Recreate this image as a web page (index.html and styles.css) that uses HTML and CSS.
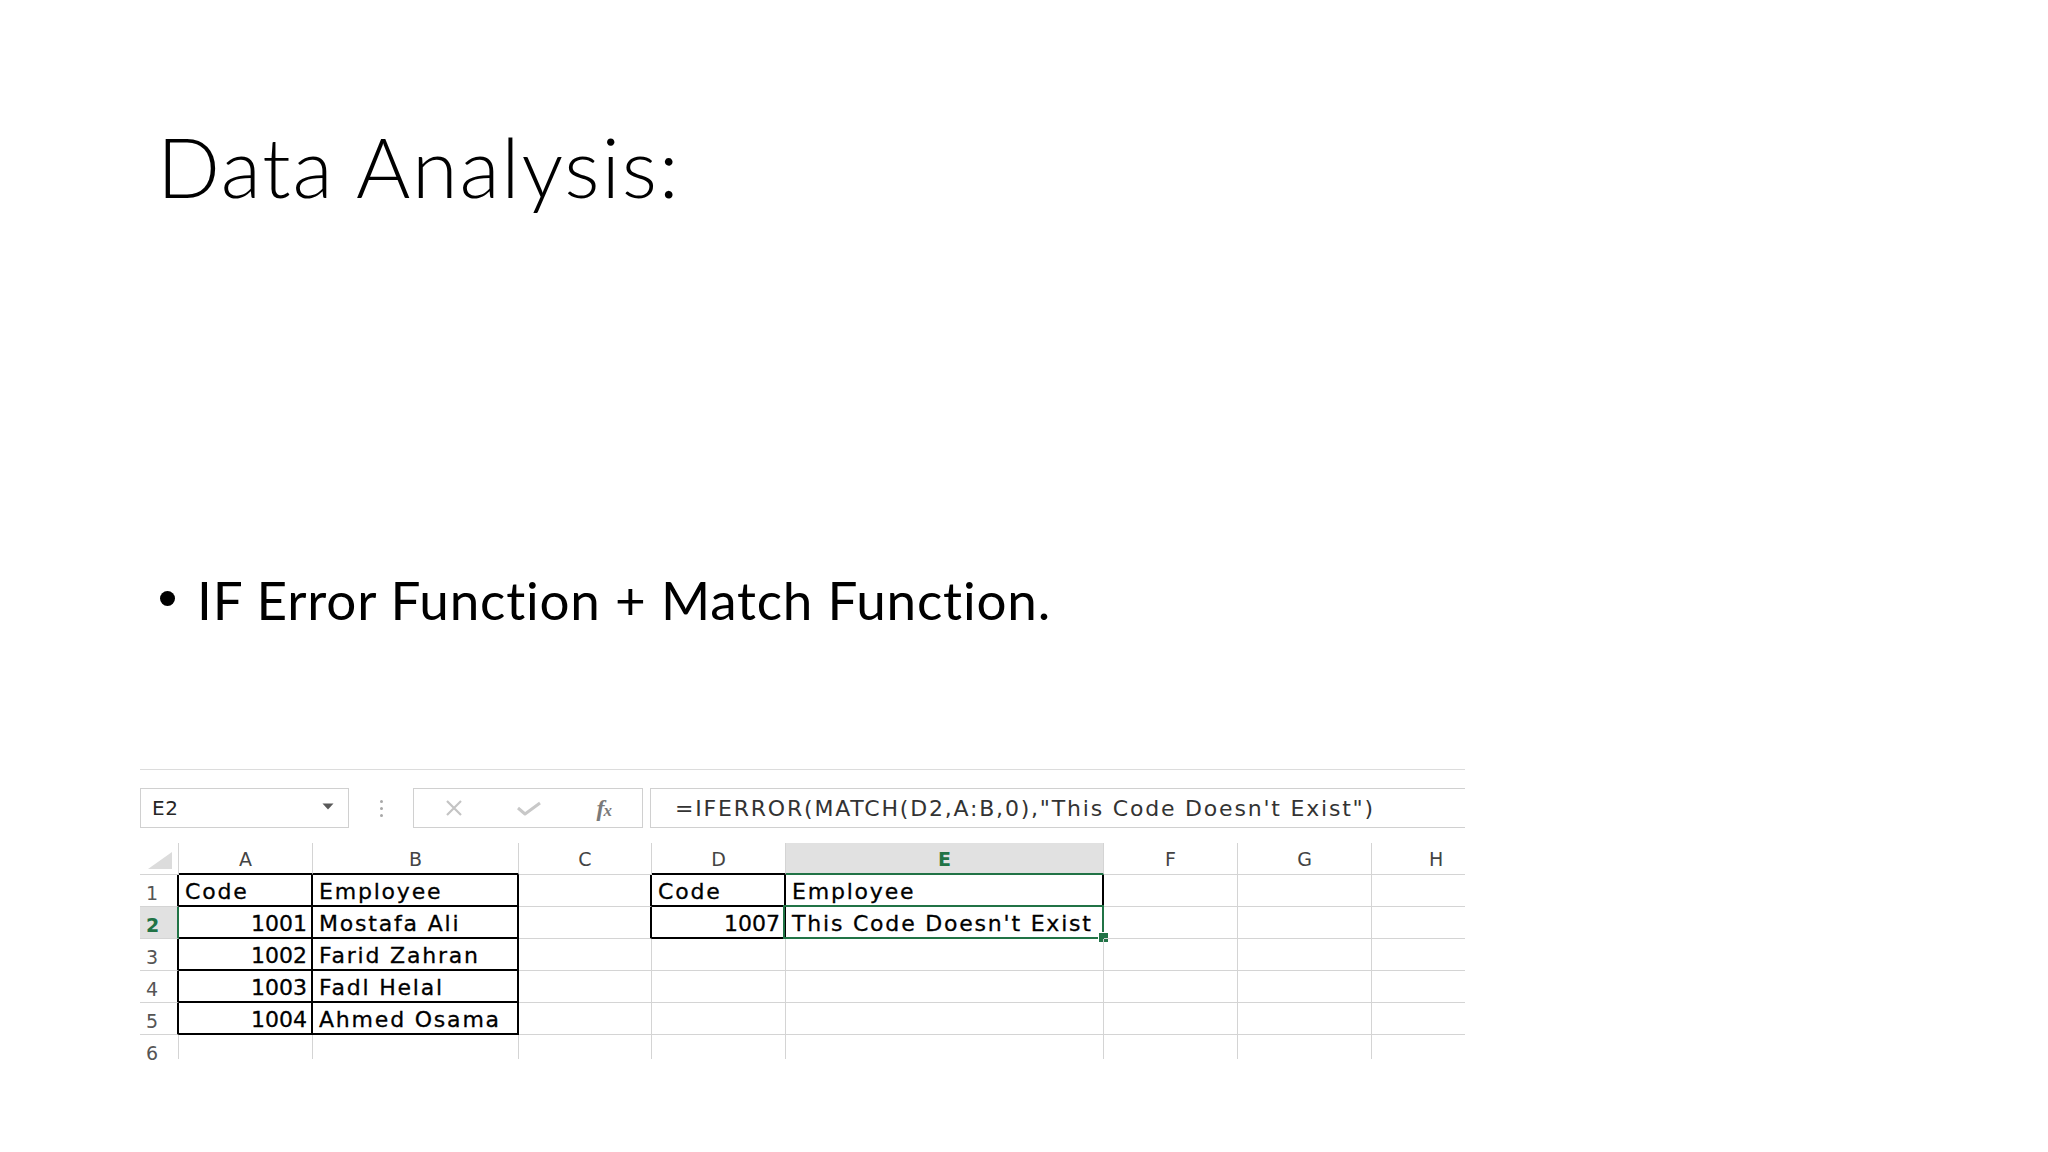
FILE: index.html
```html
<!DOCTYPE html>
<html>
<head>
<meta charset="utf-8">
<link rel="stylesheet" href="styles.css">
</head>
<body>
<div class="slide">
  <h1 class="title">Data Analysis:</h1>
  <ul class="bullets">
    <li><span class="dot"></span><span>IF Error Function + Match Function.</span></li>
  </ul>
  <div class="sheet">
    <div class="toolbar">
      <div class="namebox">
        <span class="name">E2</span>
        <svg class="caret" width="12" height="7" viewBox="0 0 12 7"><path d="M0.5 0.5 H11.5 L6 6.5 Z" fill="#595959"/></svg>
      </div>
      <div class="sep"><i></i><i></i><i></i></div>
      <div class="btnbox">
        <span class="btn"><svg width="20" height="18" viewBox="0 0 20 18"><path d="M3 2 L17 16 M17 2 L3 16" stroke="#c4c4c4" stroke-width="2.2" fill="none"/></svg></span>
        <span class="btn"><svg width="26" height="16" viewBox="0 0 26 16"><path d="M2 8 L9 14 L24 3" stroke="#c8c8c8" stroke-width="3" fill="none" stroke-linejoin="round"/></svg></span>
        <span class="btn fx"><i class="f">f</i><i class="x">x</i></span>
      </div>
      <div class="fbox">=IFERROR(MATCH(D2,A:B,0),"This Code Doesn't Exist")</div>
    </div>
    <div class="grid">
      <div class="c corner"><span class="tri"></span></div>
      <div class="c ch kb">A</div>
      <div class="c ch kb">B</div>
      <div class="c ch">C</div>
      <div class="c ch kb">D</div>
      <div class="c ch act">E</div>
      <div class="c ch">F</div>
      <div class="c ch">G</div>
      <div class="c ch cut">H</div>

      <div class="c rh kr">1</div>
      <div class="c kr kb">Code</div>
      <div class="c kr kb">Employee</div>
      <div class="c kr"></div>
      <div class="c kr kb">Code</div>
      <div class="c kr kb">Employee</div>
      <div class="c"></div>
      <div class="c"></div>
      <div class="c"></div>

      <div class="c rh ract">2</div>
      <div class="c num kr kb">1001</div>
      <div class="c kr kb">Mostafa Ali</div>
      <div class="c kr"></div>
      <div class="c num kr kb">1007</div>
      <div class="c kr kb sel">This Code Doesn't Exist</div>
      <div class="c"></div>
      <div class="c"></div>
      <div class="c"></div>

      <div class="c rh kr">3</div>
      <div class="c num kr kb">1002</div>
      <div class="c kr kb">Farid Zahran</div>
      <div class="c"></div>
      <div class="c"></div>
      <div class="c"></div>
      <div class="c"></div>
      <div class="c"></div>
      <div class="c"></div>

      <div class="c rh kr">4</div>
      <div class="c num kr kb">1003</div>
      <div class="c kr kb">Fadl Helal</div>
      <div class="c"></div>
      <div class="c"></div>
      <div class="c"></div>
      <div class="c"></div>
      <div class="c"></div>
      <div class="c"></div>

      <div class="c rh kr">5</div>
      <div class="c num kr kb">1004</div>
      <div class="c kr kb">Ahmed Osama</div>
      <div class="c"></div>
      <div class="c"></div>
      <div class="c"></div>
      <div class="c"></div>
      <div class="c"></div>
      <div class="c"></div>

      <div class="c rh last">6</div>
      <div class="c last"></div>
      <div class="c last"></div>
      <div class="c last"></div>
      <div class="c last"></div>
      <div class="c last"></div>
      <div class="c last"></div>
      <div class="c last"></div>
      <div class="c last"></div>
    </div>
  </div>
</div>
</body>
</html>
```

FILE: styles.css
```css
html, body {
  margin: 0;
  padding: 0;
  background: #ffffff;
}
body {
  width: 2048px;
  height: 1152px;
  overflow: hidden;
}
.slide {
  width: 2048px;
  height: 1152px;
  padding-top: 116px;
  box-sizing: border-box;
}
.title {
  margin: 0 0 0 157px;
  font-family: Lato, "Open Sans", sans-serif;
  font-weight: 300;
  font-size: 83px;
  line-height: 100px;
  color: #000;
  letter-spacing: 1.8px;
  font-variant-ligatures: none;
}
.bullets {
  list-style: none;
  margin: 352px 0 0 0;
  padding: 0;
}
.bullets li {
  display: flex;
  align-items: center;
  font-family: Lato, "Open Sans", sans-serif;
  font-size: 53px;
  line-height: 64px;
  color: #000;
  padding-left: 160px;
  letter-spacing: 0.8px;
  font-variant-ligatures: none;
}
.dot {
  width: 15px;
  height: 15px;
  border-radius: 50%;
  background: #000;
  margin-right: 22px;
  margin-top: -4px;
}
.sheet {
  margin: 137px 0 0 140px;
  width: 1325px;
  border-top: 1px solid #dcdcdc;
  font-family: "DejaVu Sans", Verdana, sans-serif;
}
.toolbar {
  display: flex;
  height: 40px;
  margin-top: 18px;
}
.namebox {
  width: 209px;
  box-sizing: border-box;
  border: 1.5px solid #d0d0d0;
  display: flex;
  align-items: center;
  justify-content: space-between;
  padding: 0 14px 0 11px;
}
.name {
  font-size: 20px;
  color: #262626;
  letter-spacing: 0.5px;
}
.caret {
  margin-top: -4px;
}
.sep {
  width: 64px;
  display: flex;
  flex-direction: column;
  align-items: center;
  justify-content: center;
  gap: 4px;
}
.sep i {
  width: 3px;
  height: 3px;
  border-radius: 50%;
  background: #a8a8a8;
}
.btnbox {
  width: 230px;
  box-sizing: border-box;
  border: 1.5px solid #d0d0d0;
  display: flex;
  align-items: center;
  padding-left: 2px;
}
.btn {
  width: 76px;
  display: flex;
  justify-content: center;
  align-items: center;
}
.fx {
  font-family: "Liberation Serif", serif;
  color: #7a7a7a;
  font-weight: bold;
}
.fx .f {
  font-size: 24px;
}
.fx .x {
  font-size: 17px;
  margin-top: 6px;
  margin-left: -1px;
}
.fbox {
  flex: 1;
  margin-left: 7px;
  box-sizing: border-box;
  border-top: 1.5px solid #d0d0d0;
  border-bottom: 1.5px solid #d0d0d0;
  border-left: 1.5px solid #d0d0d0;
  display: flex;
  align-items: center;
  padding-left: 24px;
  font-size: 22px;
  letter-spacing: 1.8px;
  color: #333;
  white-space: nowrap;
  overflow: hidden;
}
.grid {
  margin-top: 15px;
  display: grid;
  grid-template-columns: 39px 134px 206px 133px 134px 318px 134px 134px 93px;
  grid-template-rows: 32px repeat(5, 32px) 24px;
}
.c {
  box-sizing: border-box;
  border-right: 1px solid #d4d4d4;
  border-bottom: 1px solid #d4d4d4;
  font-size: 22px;
  letter-spacing: 1.8px;
  line-height: 30px;
  padding: 2px 0 0 6px;
  color: #000;
  -webkit-text-stroke: 0.3px #000;
  white-space: nowrap;
  position: relative;
}
.c:nth-child(9n) {
  border-right: none;
}
.num {
  text-align: right;
  padding-right: 4px;
  letter-spacing: 0;
}
.kr {
  border-right: 2px solid #000;
}
.kb {
  border-bottom: 2px solid #000;
}
.ch {
  text-align: center;
  padding: 0;
  font-size: 19px;
  letter-spacing: 0;
  line-height: 32px;
  color: #444;
  -webkit-text-stroke: 0;
}
.ch.kb {
  border-bottom: 2px solid #000;
}
.ch.act {
  background: #e1e1e1;
  color: #217346;
  font-weight: bold;
  border-bottom: 2px solid #217346;
}
.ch.cut {
  text-align: left;
  padding-left: 57px;
}
.corner {
  padding: 0;
}
.tri {
  position: absolute;
  left: 8px;
  top: 9px;
  width: 0;
  height: 0;
  border-left: 24px solid transparent;
  border-bottom: 17px solid #dcdcdc;
}
.rh {
  font-size: 19px;
  letter-spacing: 0;
  color: #555;
  -webkit-text-stroke: 0;
  padding-left: 6px;
  padding-top: 3px;
}
.ract {
  background: #e1e1e1;
  color: #217346;
  font-weight: bold;
  border-right: 2px solid #217346;
}
.last {
  border-bottom: none;
}
.sel::before {
  content: "";
  position: absolute;
  left: -3px;
  top: -2px;
  right: -2px;
  bottom: -2px;
  border: 2px solid #217346;
}
.sel::after {
  content: "";
  position: absolute;
  right: -7px;
  bottom: -6px;
  width: 9px;
  height: 9px;
  background: #217346;
  border: 1px solid #fff;
}
```
